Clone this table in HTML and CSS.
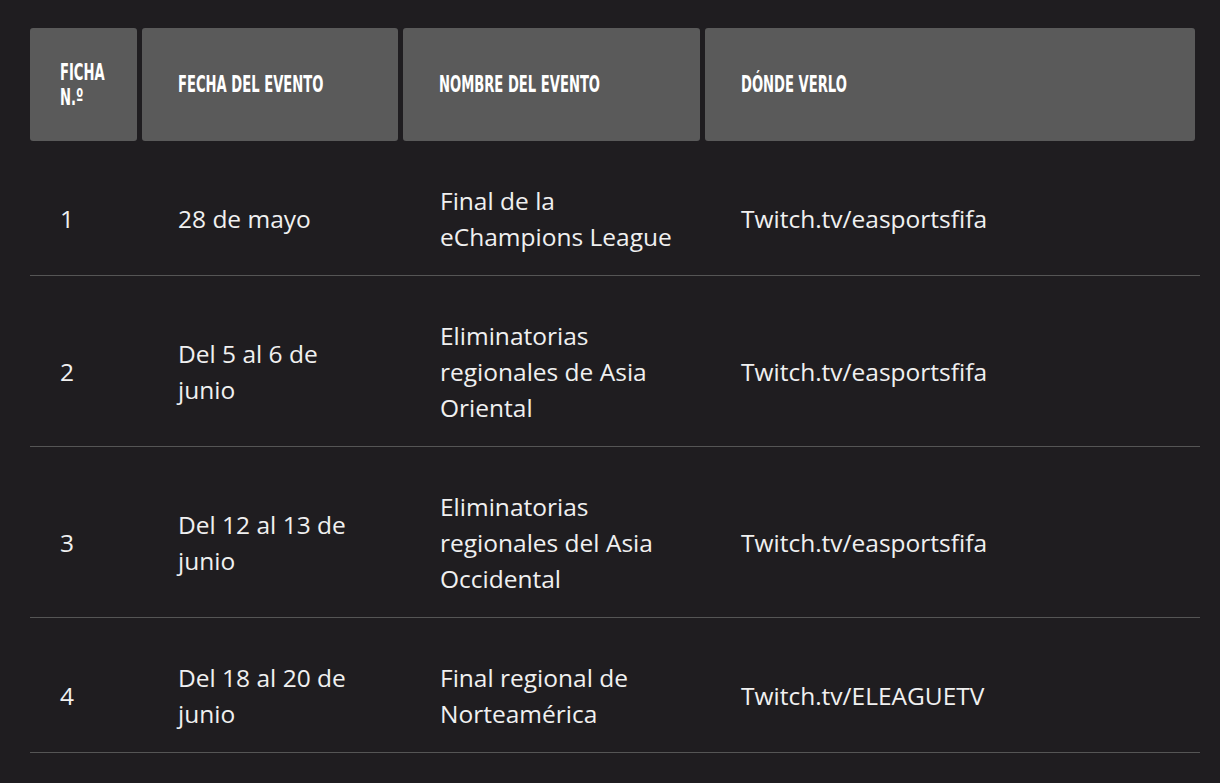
FILE: index.html
```html
<!DOCTYPE html>
<html lang="es">
<head>
<meta charset="utf-8">
<title>Eventos</title>
<link rel="stylesheet" href="styles.css">
</head>
<body>
<div class="table">
  <div class="head">
    <div class="th c1"><span class="lbl">FICHA<br>N.º</span></div>
    <div class="th c2"><span class="lbl">FECHA DEL EVENTO</span></div>
    <div class="th c3"><span class="lbl">NOMBRE DEL EVENTO</span></div>
    <div class="th c4"><span class="lbl">DÓNDE VERLO</span></div>
  </div>
  <div class="row">
    <div class="td c1">1</div>
    <div class="td c2">28 de mayo</div>
    <div class="td c3">Final de la eChampions League</div>
    <div class="td c4">Twitch.tv/easportsfifa</div>
  </div>
  <div class="row">
    <div class="td c1">2</div>
    <div class="td c2">Del 5 al 6 de junio</div>
    <div class="td c3">Eliminatorias regionales de Asia Oriental</div>
    <div class="td c4">Twitch.tv/easportsfifa</div>
  </div>
  <div class="row">
    <div class="td c1">3</div>
    <div class="td c2">Del 12 al 13 de junio</div>
    <div class="td c3">Eliminatorias regionales del Asia Occidental</div>
    <div class="td c4">Twitch.tv/easportsfifa</div>
  </div>
  <div class="row">
    <div class="td c1">4</div>
    <div class="td c2">Del 18 al 20 de junio</div>
    <div class="td c3">Final regional de Norteamérica</div>
    <div class="td c4">Twitch.tv/ELEAGUETV</div>
  </div>
</div>
</body>
</html>
```
FILE: styles.css
```css
html, body {
  margin: 0;
  padding: 0;
  background: #1f1d20;
}
body {
  padding: 28px 20px 0 30px;
  font-family: "Open Sans", "Liberation Sans", sans-serif;
  color: #f0f0f0;
}
.table {
  width: 1170px;
}
.head,
.row {
  display: grid;
  grid-template-columns: 107px 256px 297px 490px;
  column-gap: 5px;
}
.th {
  background: #5a5a5a;
  border-radius: 3px;
  height: 113px;
  box-sizing: border-box;
  display: flex;
  align-items: center;
  padding: 0 20px 0 36px;
  font-family: "DejaVu Sans Condensed", "Liberation Sans", sans-serif;
  font-weight: bold;
  font-size: 23px;
  line-height: 25px;
  color: #ffffff;
  white-space: nowrap;
}
.th.c1 {
  padding-left: 30px;
  padding-right: 10px;
}
.lbl {
  display: inline-block;
  transform: scaleX(0.635);
  transform-origin: left center;
}
.row {
  padding: 42px 0 20px;
  border-bottom: 1px solid #555;
  align-items: center;
}
.td {
  font-size: 24.5px;
  line-height: 36px;
  padding: 0 36px 0 36px;
}
.td.c1 {
  padding-left: 30px;
  padding-right: 20px;
}
.td.c3 {
  padding-left: 37px;
  padding-right: 21px;
}
```
